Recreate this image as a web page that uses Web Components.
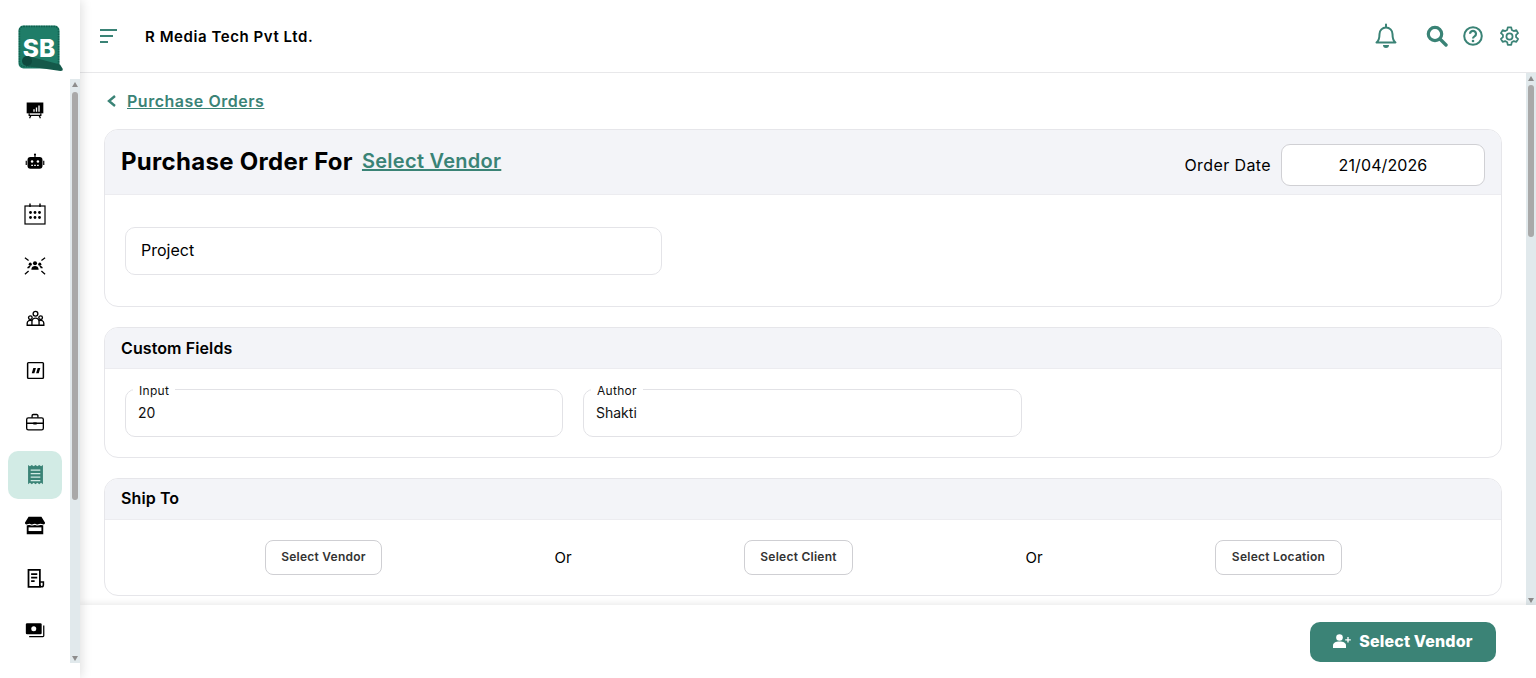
<!DOCTYPE html>
<html lang="en"><head><meta charset="utf-8"><title>Purchase Order</title>
<style>
html,body{margin:0;height:100%;overflow:hidden;background:#fff}
body{font-family:"Inter","Open Sans",sans-serif;color:#000}
</style></head><body>
<app-shell>
  <side-bar slot="side">
    <nav-item icon="board" size="20"></nav-item><nav-item icon="robot" size="20"></nav-item><nav-item icon="calendar" size="24"></nav-item>
    <nav-item icon="team" size="22"></nav-item><nav-item icon="people" size="19"></nav-item><nav-item icon="quote" size="21"></nav-item>
    <nav-item icon="case" size="20"></nav-item><nav-item icon="receipt" size="21" active></nav-item><nav-item icon="store" size="22"></nav-item>
    <nav-item icon="doc" size="21"></nav-item><nav-item icon="cash" size="20"></nav-item>
  </side-bar>
  <top-bar slot="top"></top-bar>
  <back-link>Purchase Orders</back-link>
  <po-card-main></po-card-main>
  <po-card heading="Custom Fields" body="custom">
    <legend-input label="Input" value="20" style="width:438px"></legend-input>
    <legend-input label="Author" value="Shakti" style="width:439px"></legend-input>
  </po-card>
  <po-card heading="Ship To" body="ship">
    <ship-btn style="width:117px">Select Vendor</ship-btn><or-text>Or</or-text>
    <ship-btn style="width:109px">Select Client</ship-btn><or-text>Or</or-text>
    <ship-btn style="width:127px">Select Location</ship-btn>
  </po-card>
  <foot-bar slot="foot"></foot-bar>
</app-shell>
<script>
const TEAL='#3a8376';
const svg=(w,h,vb,body,extra='')=>`<svg width="${w}" height="${h}" viewBox="${vb}" ${extra} aria-hidden="true">${body}</svg>`;
const ICONS={
board:`<path fill="#000" d="M2 3h20v13H2z"/><path fill="#fff" d="M10 11h1.600v3H10zM13 9h1.600v5H13zM16 6.500h1.600V14H16z"/><path fill="none" stroke="#000" stroke-width="1.500" d="M5 16v2.500h14V16M7 18.500 5.500 22M17 18.500l1.500 3.500"/>`,
robot:`<circle cx="12" cy="3" r="1.300"/><path d="M11.300 3h1.400v3h-1.400zM6.500 6h11A3.500 3.500 0 0 1 21 9.500v7a3.500 3.500 0 0 1-3.500 3.500h-11A3.500 3.500 0 0 1 3 16.500v-7A3.500 3.500 0 0 1 6.500 6zM.8 10.500h1.400v5H.8zM21.800 10.500h1.400v5h-1.400z"/><circle cx="8.500" cy="11.500" r="1.500" fill="#fff"/><circle cx="15.500" cy="11.500" r="1.500" fill="#fff"/><path stroke="#fff" stroke-width="1.300" d="M7.500 16h2M11 16h2M14.500 16h2"/>`,
calendar:`<rect x="2" y="4" width="20" height="18" fill="none" stroke="#000" stroke-width="1.200"/><path stroke="#000" stroke-width="1.400" d="M7 1.500V5M17 1.500V5"/><circle cx="7.500" cy="10.500" r="1.400"/><circle cx="12" cy="10.500" r="1.400"/><circle cx="16.500" cy="10.500" r="1.400"/><circle cx="7.500" cy="15.500" r="1.400"/><circle cx="12" cy="15.500" r="1.400"/><circle cx="16.500" cy="15.500" r="1.400"/>`,
team:`<circle cx="12" cy="9" r="2.200"/><circle cx="6.800" cy="10" r="1.700"/><circle cx="17.200" cy="10" r="1.700"/><path d="M8 16c0-3 2-4 4-4s4 1 4 4zM3.500 14.500c0-1.800 1.500-2.800 3.300-2.800l.7.200c-1 .7-1.500 1.500-1.600 2.600zM20.500 14.500c0-1.800-1.500-2.800-3.300-2.800l-.7.200c1 .7 1.500 1.500 1.600 2.600z"/><path stroke="#000" stroke-width="1.400" fill="none" d="M1 3l4 3M23 3l-4 3M1 21l4-3.500M23 21l-4-3.500"/>`,
people:`<g fill="none" stroke="#000" stroke-width="1.700"><circle cx="12" cy="6" r="3"/><circle cx="5.500" cy="11" r="2.300"/><circle cx="18.500" cy="11" r="2.300"/><path d="M7.500 20.500V16a4.500 4.500 0 0 1 9 0v4.500zM7.500 20.500H1.500V18a3.800 3.800 0 0 1 5.500-3.300M16.500 20.500h6V18a3.800 3.800 0 0 0-5.500-3.300"/></g>`,
quote:`<rect x="3" y="3" width="18" height="18" rx="1" fill="none" stroke="#000" stroke-width="1.700"/><path d="M9.500 9h3l-1.800 6h-3zM14.500 9h3l-1.800 6h-3z"/>`,
case:`<g fill="none" stroke="#000" stroke-width="1.600"><rect x="2" y="7" width="20" height="14.500" rx="2"/><path d="M8.500 7V4.500A1.500 1.500 0 0 1 10 3h4a1.500 1.500 0 0 1 1.500 1.500V7M2 13.500h20"/></g><path d="M10 12.500h4V15h-4z"/>`,
receipt:`<path fill="${TEAL}" d="M3.500 1l2.125 1.500L7.750 1l2.125 1.500L12 1l2.125 1.500L16.250 1l2.125 1.500L20.500 1v22l-2.125-1.500L16.250 23l-2.125-1.500L12 23l-2.125-1.500L7.750 23l-2.125-1.500L3.500 23z"/><path stroke="#d2ebe5" stroke-width="1.600" d="M6.500 7h11M6.500 11h11M6.500 15h11M6.500 19h11"/>`,
store:`<path d="M5 2h14l4 6.500a3 3 0 0 1-2 2.700V21H3V11.200a3 3 0 0 1-2-2.700z"/><path fill="#fff" d="M5 13.500h14v4H5z"/><path stroke="#fff" stroke-width="1.200" fill="none" d="M1 10.800c3 .6 4-.6 5-.6s2 1 3 .6 2-.6 3-.6 2 1 3 .6 2-.6 3-.6 2 1 5 .6"/>`,
doc:`<path fill="none" stroke="#000" stroke-width="2" d="M4 2h13v19.500H4z"/><path stroke="#000" stroke-width="2" d="M7 7h7M7 11h7M7 15h4"/><path fill="none" stroke="#000" stroke-width="1.800" d="M17 16h4v3.500a2 2 0 0 1-4 0"/>`,
cash:`<rect x="1" y="4" width="19" height="13" rx="1.500"/><circle cx="10.500" cy="10.500" r="3" fill="#fff"/><path fill="none" stroke="#000" stroke-width="1.500" d="M22.500 6.500V19a1 1 0 0 1-1 1H5"/>`
};
function def(name,render){
  customElements.define(name,class extends HTMLElement{
    constructor(){super();this.attachShadow({mode:'open'})}
    connectedCallback(){this.shadowRoot.innerHTML=render(this)}
  });
}
def('v-scroll',el=>`<style>
:host{display:flex;flex-direction:column;width:10px;flex:none;background:#e1e9ec;box-sizing:border-box;align-self:stretch}
.a{height:10px;flex:none;display:flex;align-items:center;justify-content:center}
.a i{width:0;height:0;border-left:3.500px solid transparent;border-right:3.500px solid transparent}
.u i{border-bottom:5px solid #8d8d8d}.d i{border-top:5px solid #8d8d8d}
.t{flex:1;min-height:0;padding:0 2px 0 1.500px}
.th{display:block;background:#a9a9a9;border-radius:3px;width:6px;margin-top:${el.getAttribute('top')}px;height:${el.getAttribute('len')}px}
</style><div class="a u"><i></i></div><div class="t"><span class="th"></span></div><div class="a d"><i></i></div>`);
def('app-shell',()=>`<style>
:host{display:grid;grid-template-columns:80px 1fr;height:678px;width:1536px;overflow:hidden;background:#fff}
.side{grid-row:1;z-index:3;box-shadow:2px 0 10px rgba(0,0,0,.12);background:#fff;min-height:0;height:678px}
.main{display:flex;flex-direction:column;height:678px;min-width:0}
.mid{flex:1;min-height:0;display:flex;overflow:hidden}
.content{flex:1;min-width:0;box-sizing:border-box;padding:16px 24px 0;overflow:hidden;display:flex;flex-direction:column;gap:20px}
</style>
<div class="side"><slot name="side"></slot></div>
<div class="main"><slot name="top"></slot>
<div class="mid"><div class="content"><slot></slot></div><v-scroll top="2" len="152"></v-scroll></div>
<slot name="foot"></slot></div>`);
def('side-bar',()=>`<style>
:host{display:flex;flex-direction:column;height:678px}
.logo{height:79px;flex:none;display:block}
.logo svg{display:block;margin:0}
.rail{display:flex;height:584px;flex:none}
.list{width:70px;flex:none;box-sizing:border-box;padding:8px 8px 0;display:flex;flex-direction:column;gap:4px;overflow:hidden}
</style>
<div class="logo">${svg(80,79,'0 0 80 79',`
<rect x="18.500" y="25.500" width="41" height="43" rx="5" fill="#1f7d68"/>
<rect x="19.500" y="26.500" width="39" height="40" rx="4" fill="none" stroke="#125f4e" stroke-width="1.400" stroke-dasharray="1.500 1"/>
<text x="39" y="56.500" text-anchor="middle" font-family="Inter,sans-serif" font-weight="800" font-size="24.500" fill="#fff">SB</text>
<path d="M28 56 60 64.500 62.500 68.500Q63.500 71 60.500 71L26 66Z" fill="#14594a"/>
<circle cx="27" cy="61" r="5" fill="#0e4a3e"/>`)}</div>
<div class="rail"><div class="list"><slot></slot></div><v-scroll top="3" len="408"></v-scroll></div>`);
def('nav-item',el=>{const a=el.hasAttribute('active'),s=el.getAttribute('size');return `<style>
:host{display:flex;align-items:center;justify-content:center;height:48px;width:54px;flex:none;box-sizing:border-box;padding-bottom:2px;border-radius:10px;background:${a?'#d2ebe5':'transparent'}}
svg{display:block}
</style>${svg(s,s,'0 0 24 24',ICONS[el.getAttribute('icon')])}`});
def('top-bar',()=>`<style>
:host{display:flex;align-items:center;height:73px;flex:none;box-sizing:border-box;border-bottom:1px solid #e8e8ea;padding:0 16px 0 20px;background:#fff;font-family:Inter,sans-serif}
.name{font-size:15px;font-weight:600;margin-left:28px;letter-spacing:.56px;flex:1}
svg{display:block}
</style>
${svg(17,14,'0 0 17 14',`<path stroke="${TEAL}" stroke-width="2" d="M0 1h17M0 7h13M0 13h8"/>`)}
<span class="name">R Media Tech Pvt Ltd.</span>
${svg(22,26,'0 0 22 26',`<g fill="none" stroke="${TEAL}" stroke-width="2" stroke-linecap="round" stroke-linejoin="round"><path d="M11 1.500v2.500M4.500 11a6.500 6.500 0 0 1 13 0c0 4 1 7 3 8.500H1.500c2-1.500 3-4.500 3-8.500z"/></g><path fill="${TEAL}" d="M8 22h6a3 3 0 0 1-6 0z"/>`)}
${svg(22,22,'0 0 22 22',`<circle cx="9" cy="9" r="6.700" fill="none" stroke="${TEAL}" stroke-width="3.200"/><path d="M14 14l6 6" stroke="${TEAL}" stroke-width="3.400" stroke-linecap="round"/>`,'style="margin-left:29px"')}
${svg(20,20,'0 0 20 20',`<circle cx="10" cy="10" r="8.800" fill="none" stroke="${TEAL}" stroke-width="2"/><path d="M7 7.800a3 3 0 1 1 4.500 2.600c-1 .6-1.500 1.100-1.500 2.100" fill="none" stroke="${TEAL}" stroke-width="2.200"/><circle cx="10" cy="15" r="1.300" fill="${TEAL}"/>`,'style="margin-left:15px"')}
${svg(21,21,'0 0 24 24',`<path fill="none" stroke="${TEAL}" stroke-width="2" stroke-linejoin="round" d="M10 1.500h4l.6 3 2.300 1.300 2.900-1 2 3.400-2.300 2 0 2.600 2.300 2-2 3.400-2.900-1-2.300 1.300-.6 3h-4l-.6-3-2.300-1.300-2.900 1-2-3.400 2.300-2 0-2.600-2.300-2 2-3.400 2.900 1 2.300-1.300z"/><circle cx="12" cy="12" r="3.500" fill="none" stroke="${TEAL}" stroke-width="2"/>`,'style="margin-left:16px"')}`);
def('back-link',()=>`<style>
:host{display:flex;align-items:center;height:24px;flex:none;margin-bottom:-4px;font-family:Inter,sans-serif;font-size:16px;font-weight:600;color:${TEAL};padding-left:3px}
svg{display:block;margin-right:11px}
span{text-decoration:underline;letter-spacing:.52px}
</style>${svg(9,12,'0 0 9 12',`<path d="M8 1 2 6l6 5" fill="none" stroke="${TEAL}" stroke-width="2.400"/>`)}<span><slot></slot></span>`);
const cardCss=`:host{display:block;flex:none;border:1px solid #e6e6ea;border-radius:14px;overflow:hidden;background:#fff;font-family:Inter,sans-serif}
.h{background:#f3f4f8;border-bottom:1px solid #ececf0;box-sizing:border-box;display:flex;align-items:center}`;
def('po-card-main',()=>`<style>${cardCss}
.h{height:65px;padding:0 16px}
.t{font-size:24px;font-weight:700;letter-spacing:.3px;margin-top:-2px}
.v{font-size:20px;font-weight:600;color:${TEAL};text-decoration:underline;margin-left:9px;margin-top:-3px;letter-spacing:.28px;flex:1}
.l{font-size:16px;margin-right:10px;letter-spacing:.4px;margin-top:5px}
.d{width:204px;height:42px;margin-top:5px;box-sizing:border-box;background:#fff;border:1px solid #d0d0d4;border-radius:9px;display:flex;align-items:center;justify-content:center;font-size:16px;letter-spacing:.1px}
.b{height:111px;box-sizing:border-box;padding:32px 20px 0}
.p{width:537px;height:48px;box-sizing:border-box;border:1px solid #e4e4e8;border-radius:10px;display:flex;align-items:center;padding:0 0 2px 15px;font-size:16px}
</style><div class="h"><span class="t">Purchase Order For</span><span class="v">Select Vendor</span><span class="l">Order Date</span><span class="d">21/04/2026</span></div>
<div class="b"><div class="p">Project</div></div>`);
def('po-card',el=>{const k=el.getAttribute('body');return `<style>${cardCss}
.h{height:41px;padding:0 16px;font-size:16px;font-weight:600;letter-spacing:.1px}
.h.ship{padding-bottom:2px}
.b.custom{display:flex;gap:20px;padding:20px;box-sizing:border-box;height:88px}
.b.ship{display:flex;justify-content:center;gap:172px;align-items:center;padding-left:1px;box-sizing:border-box;height:75px}
</style><div class="h ${k}">${el.getAttribute('heading')}</div><div class="b ${k}"><slot></slot></div>`});
def('legend-input',el=>`<style>
:host{display:block;position:relative;height:48px;box-sizing:border-box;border:1px solid #e2e2e6;border-radius:10px;font-family:Inter,sans-serif;flex:none}
.l{position:absolute;left:7px;top:-7px;background:#fff;padding:0 6px;font-size:12px;line-height:15px;color:#111;letter-spacing:.3px}
.v{position:absolute;left:12px;top:14px;font-size:14px;line-height:18px;color:#111}
</style><span class="l">${el.getAttribute('label')}</span><span class="v">${el.getAttribute('value')}</span>`);
def('ship-btn',()=>`<style>
:host{display:flex;align-items:center;justify-content:center;height:35px;box-sizing:border-box;padding-bottom:2px;border:1px solid #cfcfd3;border-radius:8px;font-size:12px;font-weight:600;letter-spacing:.25px;color:#333;font-family:Inter,sans-serif;background:#fff;flex:none;white-space:nowrap}
</style><slot></slot>`);
def('or-text',()=>`<style>:host{display:block;width:18px;text-align:center;font-size:15px;font-family:Inter,sans-serif;flex:none;white-space:nowrap}</style><slot></slot>`);
def('foot-bar',()=>`<style>
:host{display:flex;align-items:center;justify-content:flex-end;height:73px;flex:none;box-sizing:border-box;padding:0 40px 0 0;background:#fff;box-shadow:0 -2px 6px rgba(0,0,0,.08);position:relative;z-index:2;font-family:Inter,sans-serif}
.b{width:186px;height:40px;margin-top:1px;box-sizing:border-box;padding-bottom:2px;border-radius:10px;background:#3b8376;color:#fff;display:flex;align-items:center;justify-content:center;gap:8px;font-size:16px;font-weight:800;letter-spacing:.15px}
svg{display:block}
</style><div class="b">${svg(18,14,'0 0 18 14',`<circle cx="6.500" cy="3.500" r="3.300" fill="#fff"/><path fill="#fff" d="M0 14v-2.500C0 9 2.500 7.500 6.500 7.500s6.500 1.500 6.500 4V14z"/><path stroke="#fff" stroke-width="1.300" d="M15 3v5.500M12.200 5.800h5.600"/>`)}<span>Select Vendor</span></div>`);
</script>
</body></html>
